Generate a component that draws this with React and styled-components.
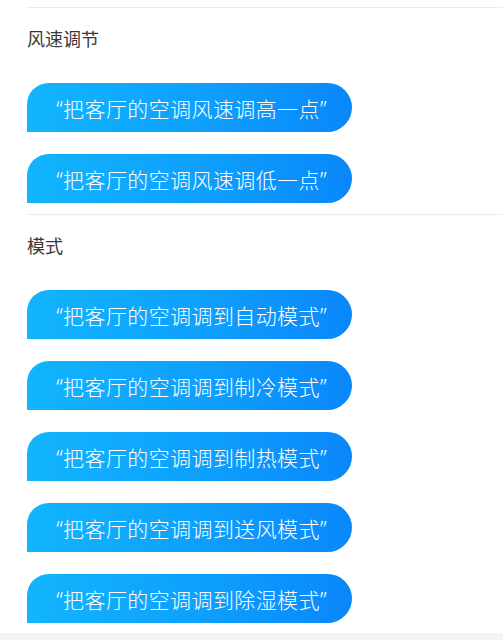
import React from "react";
import styled, { createGlobalStyle } from "styled-components";

const GlobalStyle = createGlobalStyle`
  html, body {
    margin: 0;
    padding: 0;
    background: #ffffff;
  }
  body {
    font-family: "Noto Sans", "Noto Sans CJK SC", sans-serif;
    -webkit-font-smoothing: antialiased;
  }
`;

const Page = styled.div`
  display: flex;
  flex-direction: column;
  padding-top: 7px;
  background: #ffffff;
`;

const Section = styled.section`
  display: flex;
  flex-direction: column;
  margin-left: 27px;
  border-top: 1px solid #ececef;
  padding-bottom: ${(p) => p.$bottom}px;
`;

const Title = styled.h3`
  margin: 19px 0 32px;
  font-size: 18px;
  line-height: 24px;
  font-weight: 400;
  color: #383838;
`;

const List = styled.div`
  display: flex;
  flex-direction: column;
  align-items: flex-start;
  gap: 22px;
`;

const Bubble = styled.div`
  display: flex;
  align-items: center;
  justify-content: center;
  box-sizing: border-box;
  width: 325px;
  height: 49px;
  padding: 0 0 0 4px;
  border-radius: 22px 25px 25px 0;
  background: linear-gradient(90deg, #12b5fd 0%, #0e9ffc 55%, #0a87fb 100%);
  color: #ffffff;
  font-size: 21px;
  font-weight: 300;
  letter-spacing: 0.4px;
  white-space: nowrap;
`;

const Footer = styled.div`
  height: 7px;
  background: #f3f4f7;
`;

const sections = [
  {
    title: "风速调节",
    bottom: 11,
    phrases: ["把客厅的空调风速调高一点", "把客厅的空调风速调低一点"],
  },
  {
    title: "模式",
    bottom: 10,
    phrases: [
      "把客厅的空调调到自动模式",
      "把客厅的空调调到制冷模式",
      "把客厅的空调调到制热模式",
      "把客厅的空调调到送风模式",
      "把客厅的空调调到除湿模式",
    ],
  },
];

export default function App() {
  return (
    <>
      <GlobalStyle />
      <Page>
        {sections.map((s) => (
          <Section key={s.title} $bottom={s.bottom}>
            <Title>{s.title}</Title>
            <List>
              {s.phrases.map((t) => (
                <Bubble key={t}>{`“${t}”`}</Bubble>
              ))}
            </List>
          </Section>
        ))}
        <Footer />
      </Page>
    </>
  );
}
